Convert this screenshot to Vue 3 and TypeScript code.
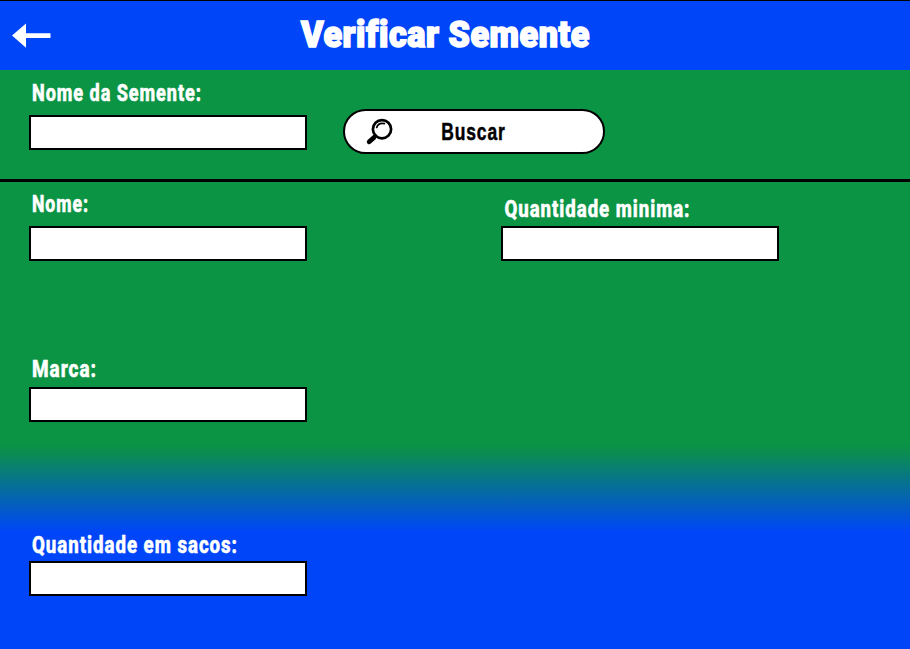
<script setup lang="ts">
import { ref } from 'vue'

interface Field {
  id: string
  label: string
  inset: number
  width: number
}

const searchField: Field = { id: 'busca', label: 'Nome da Semente:', inset: 3, width: 170 }

const fields: Field[] = [
  { id: 'nome', label: 'Nome:', inset: 3, width: 57 },
  { id: 'minima', label: 'Quantidade minima:', inset: 3.5, width: 186 },
  { id: 'marca', label: 'Marca:', inset: 3, width: 65 },
  { id: 'sacos', label: 'Quantidade em sacos:', inset: 3, width: 206 },
]

const values = ref<Record<string, string>>({ busca: '', nome: '', minima: '', marca: '', sacos: '' })
</script>

<template>
  <main class="screen">
    <header class="topbar">
      <button class="back" type="button" aria-label="Voltar">
        <svg width="40" height="26" viewBox="0 0 40 26">
          <path d="M0 12.5 14 .5V10.2H38.5V15H14V24.8Z" fill="#fff" />
        </svg>
      </button>
      <h1 class="title">
        <svg width="290" height="44">
          <text x="1" y="34.5" textLength="289" lengthAdjust="spacingAndGlyphs">Verificar Semente</text>
        </svg>
      </h1>
    </header>

    <section class="search">
      <div class="field">
        <label :for="searchField.id">
          <svg width="278" height="28">
            <text :x="searchField.inset" y="20.4" :textLength="searchField.width" lengthAdjust="spacingAndGlyphs">{{ searchField.label }}</text>
          </svg>
        </label>
        <input :id="searchField.id" v-model="values[searchField.id]" type="text" />
      </div>
      <button class="submit" type="button">
        <svg class="lens" width="28" height="28" viewBox="0 0 28 28" fill="none" stroke="#000" stroke-linecap="round">
          <circle cx="16" cy="10.2" r="9.1" stroke-width="2.7" />
          <path d="M10.7 8.5C11.6 5.3 14.5 3.8 18.4 4.6" stroke-width="1.7" />
          <path d="M9.6 16.8 8 18.4" stroke-width="3.2" />
          <path d="M8 18.4 3.2 22.8" stroke-width="4.8" />
        </svg>
        <svg class="caption" width="66" height="28">
          <text x="0.2" y="20.4" textLength="64.5" lengthAdjust="spacingAndGlyphs">Buscar</text>
        </svg>
      </button>
    </section>

    <section class="details">
      <div v-for="field in fields" :key="field.id" class="field" :class="field.id">
        <label :for="field.id">
          <svg width="278" height="28">
            <text :x="field.inset" y="20.4" :textLength="field.width" lengthAdjust="spacingAndGlyphs">{{ field.label }}</text>
          </svg>
        </label>
        <input :id="field.id" v-model="values[field.id]" type="text" />
      </div>
    </section>
  </main>
</template>

<style>
body {
  margin: 0;
}
</style>

<style scoped>
.screen {
  box-sizing: border-box;
  display: flex;
  flex-direction: column;
  height: 649px;
  overflow: hidden;
  background: linear-gradient(#0a9444 444px, #0a8a57 456px, #0046f8 532px);
  font-family: Roboto, 'Liberation Sans', sans-serif;
}

svg {
  display: block;
  overflow: visible;
}

.topbar {
  box-sizing: border-box;
  display: grid;
  grid-template-columns: 300px 290px;
  flex: none;
  height: 70px;
  border-top: 1px solid #000;
  background: #0046f8;
}

.back {
  justify-self: start;
  align-self: start;
  margin: 22px 0 0 12px;
  padding: 0;
  border: 0;
  background: none;
}

.title {
  margin: 11px 0 0;
}

.title text {
  fill: #fff;
  stroke: #fff;
  stroke-width: 1.6px;
  font-size: 36.5px;
  font-weight: 900;
  font-variant-ligatures: none;
  letter-spacing: 0.6px;
}

.search {
  box-sizing: border-box;
  display: flex;
  flex: none;
  align-items: flex-start;
  gap: 36px;
  height: 112px;
  padding: 11px 29px 0;
  border-bottom: 3px solid #000;
}

.field {
  display: flex;
  flex-direction: column;
  width: 278px;
}

.field text,
.caption text {
  fill: #fff;
  stroke: #fff;
  stroke-width: 0.5px;
  font-size: 23.5px;
  font-weight: 800;
  letter-spacing: 1.2px;
}

label {
  height: 34px;
}

input {
  box-sizing: border-box;
  width: 278px;
  height: 35px;
  margin: 0;
  padding: 4px 8px;
  border: 2px solid #000;
  border-radius: 0;
  outline: 0;
  background: #fff;
  font: 18px Roboto, sans-serif;
}

.submit {
  box-sizing: border-box;
  display: flex;
  align-items: flex-start;
  width: 262px;
  height: 45px;
  margin-top: 28px;
  padding: 0;
  border: 2px solid #000;
  border-radius: 23px;
  background: #fff;
}

.lens {
  margin: 8px 0 0 21px;
}

.caption {
  margin: 9px 0 0 47px;
}

.submit .caption text {
  fill: #000;
  stroke: #000;
}

.details {
  display: grid;
  grid-template-columns: 472px 278px;
  grid-template-rows: 162px 174px 80px;
  padding: 10px 29px 0;
}

.minima {
  padding-top: 5px;
}

.minima label {
  height: 29px;
}

.marca,
.sacos {
  grid-column: 1;
}

.marca {
  padding-top: 3px;
}

.marca label {
  height: 30px;
}

.sacos {
  padding-top: 5px;
}

.sacos label {
  height: 28px;
}
</style>
